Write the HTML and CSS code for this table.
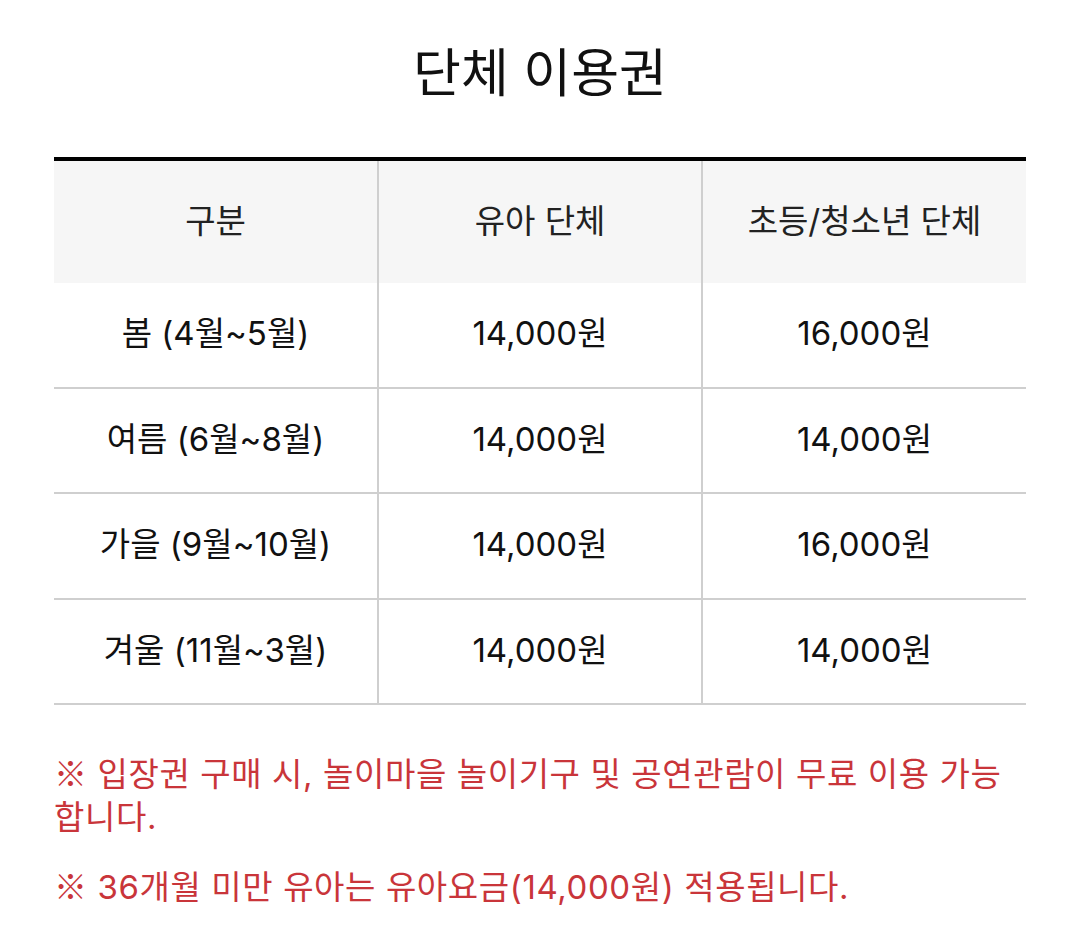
FILE: index.html
```html
<!DOCTYPE html>
<html lang="ko">
<head>
<meta charset="utf-8">
<link rel="stylesheet" href="styles.css">
</head>
<body>
<div class="page">
  <h1 class="title">단체 이용권</h1>
  <table class="price-table">
    <thead>
      <tr><th>구분</th><th>유아 단체</th><th>초등/청소년 단체</th></tr>
    </thead>
    <tbody>
      <tr><td>봄 (4월~5월)</td><td>14,000원</td><td>16,000원</td></tr>
      <tr><td>여름 (6월~8월)</td><td>14,000원</td><td>14,000원</td></tr>
      <tr><td>가을 (9월~10월)</td><td>14,000원</td><td>16,000원</td></tr>
      <tr><td>겨울 (11월~3월)</td><td>14,000원</td><td>14,000원</td></tr>
    </tbody>
  </table>
  <p class="note"><span class="mark">※</span> 입장권 구매 시, 놀이마을 놀이기구 및 공연관람이 무료 이용 가능합니다.</p>
  <p class="note"><span class="mark">※</span> 36개월 미만 유아는 유아요금(14,000원) 적용됩니다.</p>
</div>
</body>
</html>
```

FILE: styles.css
```css
html, body {
  margin: 0;
  padding: 0;
  background: #fff;
}
body {
  font-family: Inter, "Noto Sans CJK KR", "Noto Sans", sans-serif;
  color: #111;
}
.page {
  padding: 36px 53px 0 54px;
}
.title {
  margin: 0 0 53px;
  font-family: "Noto Sans CJK KR", sans-serif;
  font-size: 52px;
  line-height: 68px;
  font-weight: 400;
  text-align: center;
  color: #111;
}
.price-table {
  width: 100%;
  border-collapse: collapse;
  table-layout: fixed;
  border-top: 4px solid #000;
}
.price-table th,
.price-table td {
  font-size: 33px;
  font-weight: 400;
  text-align: center;
  padding: 0 0 7px;
  border-left: 2px solid #cfcfcf;
}
.price-table th:first-child,
.price-table td:first-child {
  border-left: none;
}
.price-table th {
  height: 115px;
  background: #f6f6f6;
  color: #222;
}
.price-table td {
  height: 96.5px;
  border-bottom: 2px solid #cfcfcf;
  color: #111;
}
.note {
  margin: 0 0 25px;
  font-size: 33px;
  line-height: 43px;
  letter-spacing: 0.6px;
  color: #c9353a;
}
.note .mark {
  font-family: "Noto Sans CJK KR", sans-serif;
}
.price-table + .note {
  margin-top: 46px;
}
```
